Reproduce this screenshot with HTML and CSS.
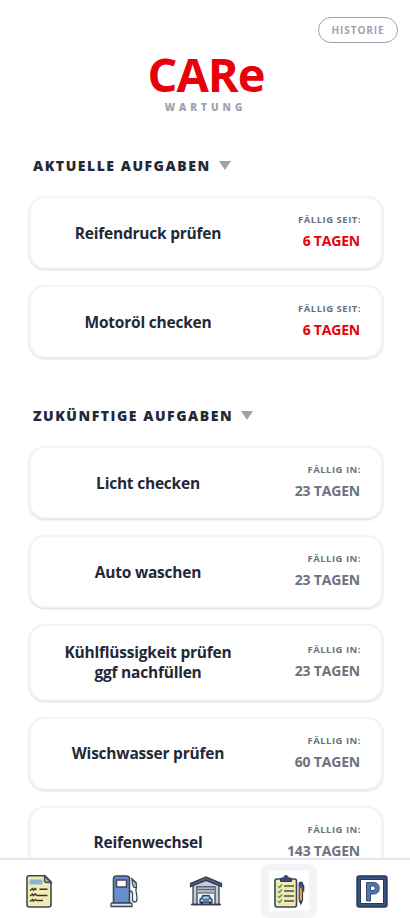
FILE: index.html
```html
<!DOCTYPE html>
<html lang="de">
<head>
<meta charset="utf-8">
<title>CARe</title>
<link rel="stylesheet" href="styles.css">
</head>
<body>
<div class="app">
  <main class="content">
    <div class="topbar"><button class="history">HISTORIE</button></div>
    <header class="brand">
      <h1 class="logo">CARe</h1>
      <p class="subtitle">WARTUNG</p>
    </header>
    <section class="group">
      <h2 class="heading"><span>AKTUELLE AUFGABEN</span><i class="caret"></i></h2>
      <article class="card"><h3 class="task">Reifendruck prüfen</h3><div class="due"><span class="label">FÄLLIG SEIT:</span><span class="days late">6 TAGEN</span></div></article>
      <article class="card"><h3 class="task">Motoröl checken</h3><div class="due"><span class="label">FÄLLIG SEIT:</span><span class="days late">6 TAGEN</span></div></article>
    </section>
    <section class="group">
      <h2 class="heading"><span>ZUKÜNFTIGE AUFGABEN</span><i class="caret"></i></h2>
      <article class="card"><h3 class="task">Licht checken</h3><div class="due"><span class="label">FÄLLIG IN:</span><span class="days">23 TAGEN</span></div></article>
      <article class="card"><h3 class="task">Auto waschen</h3><div class="due"><span class="label">FÄLLIG IN:</span><span class="days">23 TAGEN</span></div></article>
      <article class="card tall"><h3 class="task">Kühlflüssigkeit prüfen<br>ggf nachfüllen</h3><div class="due"><span class="label">FÄLLIG IN:</span><span class="days">23 TAGEN</span></div></article>
      <article class="card"><h3 class="task">Wischwasser prüfen</h3><div class="due"><span class="label">FÄLLIG IN:</span><span class="days">60 TAGEN</span></div></article>
      <article class="card"><h3 class="task">Reifenwechsel</h3><div class="due"><span class="label">FÄLLIG IN:</span><span class="days">143 TAGEN</span></div></article>
    </section>
  </main>
  <nav class="nav">
    <a class="tab"><svg class="icon" viewBox="0 0 40 40">
      <path d="M9 4.800h16l6 6V33.500q0 2.500-2.500 2.500H9.500Q7 36 7 33.500V7q0-2.200 2-2.200z" fill="#f5ebb0" stroke="#3d4a5c" stroke-width="1.600"/>
      <path d="M24.500 5v4.500q0 2 2 2h4.500z" fill="#a9b9a6" stroke="#3d4a5c" stroke-width="1.400"/>
      <path d="M9.500 8.500h13v5h-13z" fill="#8bb2d2"/>
      <path d="M10 19.500l2.500-2 .8 1.600 2-1.600 1 1.500M19.500 18.300h8M10 25l2.500-2 .8 1.600 2-1.600 1.500 1.500H27.500M10 30.500l2.500-2 .8 1.600 2-1.600 1.500 1H23" fill="none" stroke="#30343a" stroke-width="1.400"/>
    </svg></a>
    <a class="tab"><svg class="icon" viewBox="0 0 40 40">
      <path d="M10.500 32V8q0-3 3-3h10q3 0 3 3v24z" fill="#668fcb" stroke="#3c4657" stroke-width="1.600"/>
      <path d="M13.500 9h10v7h-10z" fill="#fff" stroke="#3c4657" stroke-width="1.500"/>
      <path d="M9 32h19q1 0 1 1v2.500H8V33q0-1 1-1z" fill="#dde3ea" stroke="#3c4657" stroke-width="1.300"/>
      <path d="M27 20q2.500 0 2.500 3v5.500q0 2.500 2.200 2.500 2.300 0 2.300-3.500 0-3-.7-5.500-.8-3 .2-6.500l-.5-4-5-4.500" fill="none" stroke="#3c4657" stroke-width="1.300"/>
      <path d="M29 8.500l4 3.500.5 4.500h-2.500l-1.500-3z" fill="#b8c2cd" stroke="#3c4657" stroke-width="1.100"/>
    </svg></a>
    <a class="tab"><svg class="icon" viewBox="0 0 40 40">
      <path d="M7 12.500L20 8l13 4.500v21H7z" fill="#c6ccd8" stroke="#394252" stroke-width="1.300"/>
      <path d="M11 16h18v17.500H11z" fill="#edf0f5" stroke="#394252" stroke-width="1.300"/>
      <path d="M11.500 16.500h17v6h-17z" fill="#aeb6c4"/>
      <path d="M11.500 18.500h17M11.500 22h17" stroke="#596273" stroke-width="1.200"/>
      <path d="M4.500 15.500v-3L20 6l15.500 6.500v3L20 9.500z" fill="#4c5d7e" stroke="#323b4c" stroke-width="1.200"/>
      <path d="M14 32v-3.500l1.500-1.300 1.400-2.700h6.200l1.400 2.700 1.500 1.300V32z" fill="#5481ab" stroke="#293b56" stroke-width="1.200"/>
      <path d="M16.900 27.500l.9-1.800h4.400l.9 1.800z" fill="#bdd5e5"/>
      <path d="M14.500 31.500h2.500V34h-2.500zM23 31.500h2.500V34H23z" fill="#25344b"/>
      <path d="M14.800 29.500h2M23.200 29.500h2" stroke="#fff"/>
      <path d="M5 33.500h7M28 33.500h7" stroke="#323b4c" stroke-width="1.400"/>
    </svg></a>
    <a class="tab active"><svg class="icon" viewBox="0 0 40 40">
      <path d="M0 0h40v40H0z" fill="#fff"/>
      <rect x="6" y="8" width="21.500" height="28" rx="2" fill="#f1e9ae" stroke="#34435a" stroke-width="1.600"/>
      <path d="M11.500 10.500V8q0-1 1-1h2Q15 4.500 17 4.500T19.500 7h2q1 0 1 1v2.500z" fill="#354c78" stroke="#263955"/>
      <path d="M9 15l1.500 1.500L13 13.500M9 20l1.500 1.500L13 18.500M9 25l1.500 1.500L13 23.500M9 30l1.500 1.500L13 28.500" fill="none" stroke="#5e9b5b" stroke-width="1.500"/>
      <path d="M15 15H25M15 20H25M15 25H25M15 30H25" stroke="#4b5356" stroke-width="1.300"/>
      <path d="M30.200 15h3.300v14l-1.700 4-1.600-4z" fill="#e8ae45" stroke="#34384a" stroke-width="1.200"/>
      <path d="M30.200 15v-2q0-2 1.700-2t1.800 2v1l1 .5v6" fill="#435274" stroke="#34384a" stroke-width="1.200"/>
      <path d="M30.300 29.500h3.200l-1.600 4z" fill="#34384a"/>
    </svg></a>
    <a class="tab"><svg class="icon" viewBox="0 0 40 40">
      <rect x="5" y="5" width="30" height="31" rx="2.500" fill="#375481" stroke="#243655" stroke-width="1.400"/>
      <path d="M8.500 8.500h23v24h-23z" fill="#fff" stroke="#243655"/>
      <path d="M14.500 11.500h6.500q6.200 0 6.200 5.800T21 23h-2.500v7h-4zM18.500 15v4.500H21q2.300 0 2.300-2.200T21 15z" fill="#5377aa" fill-rule="evenodd" stroke="#2b426a" stroke-width=".9"/>
    </svg></a>
  </nav>
</div>
</body>
</html>
```
FILE: styles.css
```css
* { box-sizing: border-box; margin: 0; padding: 0; }
body { background: #fff; font-family: "Segoe UI", "Open Sans", "Noto Sans", sans-serif; color: #1f2937; }
.app { display: flex; flex-direction: column; height: 918px; overflow: hidden; }
.content { flex: 1; min-height: 0; overflow: hidden; padding: 17px 12px 0; }
.topbar { display: flex; justify-content: flex-end; height: 26px; }
.history { width: 80px; height: 26px; padding-bottom: 1px; border: 1px solid #9ca3af; border-radius: 13px; background: #fff; font: 700 10px "Open Sans", sans-serif; letter-spacing: .9px; color: #9ca3af; }
.brand { height: 104px; padding-top: 7px; text-align: center; }
.logo { height: 49px; margin-left: 2px; font-size: 47px; line-height: 48px; font-weight: 700; letter-spacing: -1.100px; color: #e8000b; }
.subtitle { padding-top: 1px; margin-left: 1px; font-size: 10px; line-height: 15px; font-weight: 800; letter-spacing: 4px; color: #9ca3af; }
.group { display: flex; flex-direction: column; gap: 16px; padding: 0 15px 0 17px; margin-bottom: 39px; }
.heading { display: flex; align-items: center; gap: 8px; height: 33px; padding: 4px 0 0 4px; font-size: 14px; line-height: 20px; font-weight: 800; letter-spacing: 1.530px; }
.caret { border: 6px solid transparent; border-top: 9px solid #9ca3af; border-bottom: 0; }
.card { display: flex; align-items: center; flex: none; height: 73px; padding: 0 21px 0 22px; border: 2px solid #f3f4f6; border-radius: 16px; background: #fff; box-shadow: 0 1px 3px rgba(0,0,0,.1), 0 1px 2px rgba(0,0,0,.06); }
.tall { height: 76.500px; }
.task { width: 190px; text-align: center; font-size: 15.500px; line-height: 20px; font-weight: 700; letter-spacing: -.22px; white-space: nowrap; }
.due { display: flex; flex: 1; flex-direction: column; align-items: flex-end; gap: 4px; padding-bottom: 1px; color: #6b7280; font-weight: 700; white-space: nowrap; }
.label { margin-right: -1px; font-size: 9.500px; line-height: 14px; font-weight: 700; letter-spacing: .5px; }
.days { font-size: 14px; line-height: 20px; letter-spacing: -.2px; }
.late { color: #e8000b; }
.nav { display: flex; flex: none; height: 60px; padding: 4px 0 0 2px; border-top: 2px solid #e5e7eb; background: #fff; justify-content: center; gap: 27px; }
.tab { display: flex; justify-content: center; align-items: center; width: 56px; height: 54px; border-radius: 8px; }
.active { background: #f3f4f6; }
.icon { width: 40px; height: 40px; }
```
